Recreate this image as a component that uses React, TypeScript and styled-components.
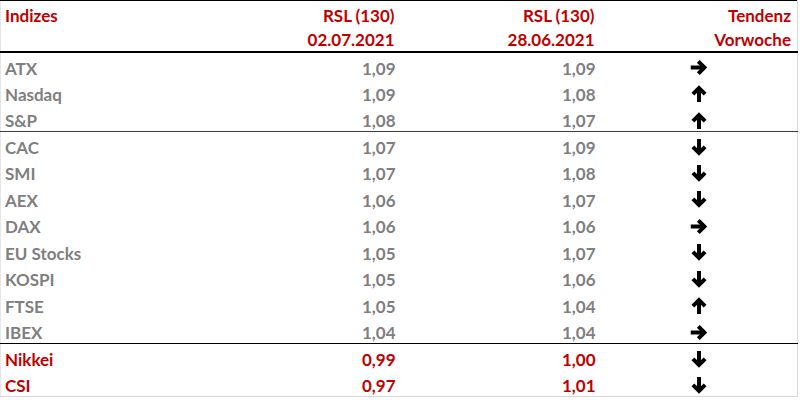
import styled, { createGlobalStyle } from 'styled-components';

type Trend = 'up' | 'down' | 'right';

interface IRow {
  name: string;
  now: string;
  before: string;
  trend: Trend;
  group: 'top' | 'mid' | 'weak';
}

const rows: IRow[] = [
  { name: 'ATX', now: '1,09', before: '1,09', trend: 'right', group: 'top' },
  { name: 'Nasdaq', now: '1,09', before: '1,08', trend: 'up', group: 'top' },
  { name: 'S&P', now: '1,08', before: '1,07', trend: 'up', group: 'top' },
  { name: 'CAC', now: '1,07', before: '1,09', trend: 'down', group: 'mid' },
  { name: 'SMI', now: '1,07', before: '1,08', trend: 'down', group: 'mid' },
  { name: 'AEX', now: '1,06', before: '1,07', trend: 'down', group: 'mid' },
  { name: 'DAX', now: '1,06', before: '1,06', trend: 'right', group: 'mid' },
  { name: 'EU Stocks', now: '1,05', before: '1,07', trend: 'down', group: 'mid' },
  { name: 'KOSPI', now: '1,05', before: '1,06', trend: 'down', group: 'mid' },
  { name: 'FTSE', now: '1,05', before: '1,04', trend: 'up', group: 'mid' },
  { name: 'IBEX', now: '1,04', before: '1,04', trend: 'right', group: 'mid' },
  { name: 'Nikkei', now: '0,99', before: '1,00', trend: 'down', group: 'weak' },
  { name: 'CSI', now: '0,97', before: '1,01', trend: 'down', group: 'weak' },
];

const rotation: Record<Trend, number> = { up: 0, right: 90, down: 180 };

const TrendArrow = ({ trend }: { trend: Trend }) => (
  <ArrowIcon viewBox="0 0 16 17" $rotate={rotation[trend]}>
    <path d="M8 17 V3" />
    <path d="M1.9 9.2 L8 3.1 L14.1 9.2" />
  </ArrowIcon>
);

const App = () => {
  return (
    <>
      <GlobalStyle />
      <Table>
        <colgroup>
          <col style={{ width: 200 }} />
          <col style={{ width: 200 }} />
          <col style={{ width: 200 }} />
          <col />
        </colgroup>
        <thead>
          <HeadRow>
            <HeadCell $align="left">Indizes</HeadCell>
            <HeadCell>RSL (130)</HeadCell>
            <HeadCell>RSL (130)</HeadCell>
            <HeadCell>Tendenz</HeadCell>
          </HeadRow>
          <HeadRow $last>
            <HeadCell />
            <HeadCell>02.07.2021</HeadCell>
            <HeadCell>28.06.2021</HeadCell>
            <HeadCell>Vorwoche</HeadCell>
          </HeadRow>
        </thead>
        <tbody>
          {rows.map((row, i) => {
            const next = rows[i + 1];
            const split = next ? next.group !== row.group : false;
            return (
              <DataRow key={row.name} $split={split ? row.group : undefined}>
                <Cell $align="left" $weak={row.group === 'weak'}>
                  {row.name}
                </Cell>
                <Cell $weak={row.group === 'weak'}>{row.now}</Cell>
                <Cell $weak={row.group === 'weak'}>{row.before}</Cell>
                <TrendCell>
                  <TrendArrow trend={row.trend} />
                </TrendCell>
              </DataRow>
            );
          })}
        </tbody>
      </Table>
    </>
  );
};

export default App;

const GlobalStyle = createGlobalStyle`
  body {
    margin: 0;
    background: #fff;
    font-family: Lato, "Open Sans", sans-serif;
  }
`;

const Table = styled.table`
  width: 798px;
  border-collapse: collapse;
  table-layout: fixed;
  border-top: 1px solid #000;
  border-left: 1px solid #e6e6e6;
  border-right: 1px solid #d9d9d9;
  border-bottom: 1px solid #d9d9d9;
  font-size: 17px;
  font-weight: 700;
`;

const HeadRow = styled.tr<{ $last?: boolean }>`
  height: 25.5px;
  border-bottom: ${({ $last }) => ($last ? '2px solid #000' : 'none')};
`;

const HeadCell = styled.th<{ $align?: 'left' | 'right' }>`
  padding: 4px 6px 0 4px;
  text-align: ${({ $align }) => $align || 'right'};
  vertical-align: middle;
  color: #c00000;
  font-weight: 700;
  line-height: 20px;
  white-space: nowrap;
`;

const DataRow = styled.tr<{ $split?: string }>`
  height: 26.5px;
  border-bottom: ${({ $split }) =>
    $split === 'top'
      ? '1px solid #3a3a3a'
      : $split === 'mid'
        ? '1px solid #000'
        : 'none'};
`;

const Cell = styled.td<{ $align?: 'left' | 'right'; $weak?: boolean }>`
  height: 26.5px;
  box-sizing: border-box;
  padding: 6px 5px 0 4px;
  text-align: ${({ $align }) => $align || 'right'};
  vertical-align: middle;
  color: ${({ $weak }) => ($weak ? '#c00000' : '#7f7f7f')};
  line-height: 20px;
  white-space: nowrap;
`;

const TrendCell = styled.td`
  padding: 4px 0 0;
  text-align: center;
  vertical-align: middle;
  line-height: 0;
`;

const ArrowIcon = styled.svg<{ $rotate: number }>`
  width: 16px;
  height: 17px;
  margin-left: 1px;
  transform: rotate(${({ $rotate }) => $rotate}deg);

  path {
    fill: none;
    stroke: #000;
    stroke-width: 4;
    stroke-linejoin: miter;
    stroke-linecap: butt;
  }
`;
